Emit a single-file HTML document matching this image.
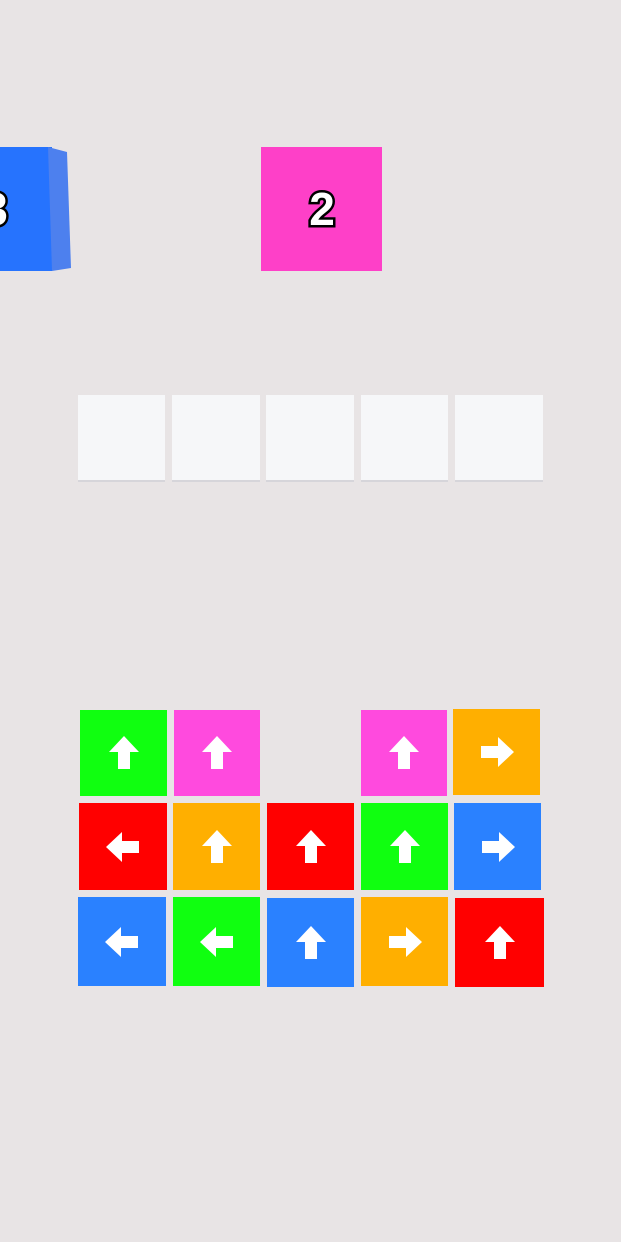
<!DOCTYPE html>
<html><head><style>
body{margin:0;width:621px;height:1242px;background:#e8e4e5;position:relative;overflow:hidden;font-family:"Liberation Sans",sans-serif}
.t{position:absolute}
.s{position:absolute;background:#f6f7f9;box-shadow:0 2px 0 #d6d5da}
.num{position:absolute;font-weight:bold;font-size:46px;color:#fff;-webkit-text-stroke:5px #000;paint-order:stroke fill;text-align:center;line-height:50px}
.t svg{position:absolute;left:50%;top:50%;width:30px;height:34px;margin:-17px 0 0 -15px}
</style></head><body>
<div class="t" style="left:0;top:147px;width:52px;height:124px;background:#2673fe"></div>
<svg class="t" style="left:0;top:0" width="621" height="300"><polygon points="48,147 67,152 71,268 52,271" fill="#4d80ee"/></svg>
<div class="num" style="left:-20px;top:184px;width:30px">3</div>
<div class="t" style="left:261px;top:147px;width:121px;height:124px;background:#fe40c8"></div>
<div class="num" style="left:292px;top:184px;width:60px">2</div>

<div class="s" style="left:78px;top:395px;width:87px;height:85px"></div>
<div class="s" style="left:172px;top:395px;width:88px;height:85px"></div>
<div class="s" style="left:266px;top:395px;width:88px;height:85px"></div>
<div class="s" style="left:361px;top:395px;width:87px;height:85px"></div>
<div class="s" style="left:455px;top:395px;width:88px;height:85px"></div>

<svg width="0" height="0" style="position:absolute"><defs><polygon id="a" points="15,0 30,16 21,16 21,33 9,33 9,16 0,16" fill="#fff"/></defs></svg>

<div class="t" style="left:80px;top:710px;width:87px;height:86px;background:#10ff10"><svg viewBox="0 0 30 34"><use href="#a"/></svg></div>
<div class="t" style="left:174px;top:710px;width:86px;height:86px;background:#ff4ade"><svg viewBox="0 0 30 34"><use href="#a"/></svg></div>
<div class="t" style="left:361px;top:710px;width:86px;height:86px;background:#ff4ade"><svg viewBox="0 0 30 34"><use href="#a"/></svg></div>
<div class="t" style="left:453px;top:709px;width:87px;height:86px;background:#ffaf00"><svg viewBox="0 0 30 34" style="transform:rotate(90deg)"><use href="#a"/></svg></div>

<div class="t" style="left:79px;top:803px;width:88px;height:87px;background:#ff0000"><svg viewBox="0 0 30 34" style="transform:rotate(-90deg)"><use href="#a"/></svg></div>
<div class="t" style="left:173px;top:803px;width:87px;height:87px;background:#ffaf00"><svg viewBox="0 0 30 34"><use href="#a"/></svg></div>
<div class="t" style="left:267px;top:803px;width:87px;height:87px;background:#ff0000"><svg viewBox="0 0 30 34"><use href="#a"/></svg></div>
<div class="t" style="left:361px;top:803px;width:87px;height:87px;background:#10ff10"><svg viewBox="0 0 30 34"><use href="#a"/></svg></div>
<div class="t" style="left:454px;top:803px;width:87px;height:87px;background:#2a81ff"><svg viewBox="0 0 30 34" style="transform:rotate(90deg)"><use href="#a"/></svg></div>

<div class="t" style="left:78px;top:897px;width:88px;height:89px;background:#2a81ff"><svg viewBox="0 0 30 34" style="transform:rotate(-90deg)"><use href="#a"/></svg></div>
<div class="t" style="left:173px;top:897px;width:87px;height:89px;background:#10ff10"><svg viewBox="0 0 30 34" style="transform:rotate(-90deg)"><use href="#a"/></svg></div>
<div class="t" style="left:267px;top:898px;width:87px;height:89px;background:#2a81ff"><svg viewBox="0 0 30 34"><use href="#a"/></svg></div>
<div class="t" style="left:361px;top:897px;width:87px;height:89px;background:#ffaf00"><svg viewBox="0 0 30 34" style="transform:rotate(90deg)"><use href="#a"/></svg></div>
<div class="t" style="left:455px;top:898px;width:89px;height:89px;background:#ff0000"><svg viewBox="0 0 30 34"><use href="#a"/></svg></div>
</body></html>
